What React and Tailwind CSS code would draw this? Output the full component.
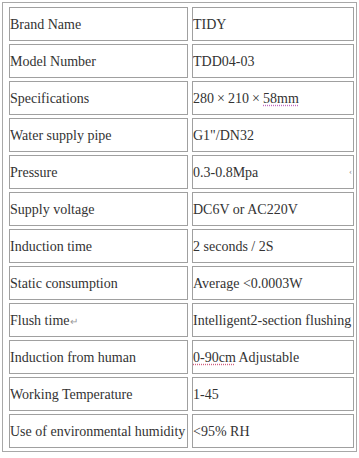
import React from "react";

const rows = [
  ["Brand Name", "TIDY"],
  ["Model Number", "TDD04-03"],
  ["Specifications", "spec"],
  ["Water supply pipe", "G1\"/DN32"],
  ["Pressure", "pressure"],
  ["Supply voltage", "DC6V or AC220V"],
  ["Induction time", "2 seconds / 2S"],
  ["Static consumption", "Average <0.0003W"],
  ["Flush time", "Intelligent2-section flushing"],
  ["Induction from human", "range"],
  ["Working Temperature", "1-45"],
  ["Use of environmental humidity", "<95% RH"],
];

function Times() {
  return <span className="inline-block w-[14px] text-center">×</span>;
}

function Value({ v }) {
  if (v === "spec") {
    return (
      <span>
        280<Times />210<Times />
        <span className="underline decoration-dotted decoration-[#c06cc0] underline-offset-2">58mm</span>
      </span>
    );
  }
  if (v === "pressure") {
    return (
      <span className="flex w-full items-center justify-between">
        <span>0.3-0.8Mpa</span>
        <span className="mr-[1px] text-[9px] text-[#888]">‹</span>
      </span>
    );
  }
  if (v === "range") {
    return (
      <span>
        <span className="underline decoration-dotted decoration-[#d06080] underline-offset-2">0-90cm</span> Adjustable
      </span>
    );
  }
  return <span>{v}</span>;
}

function Label({ t }) {
  if (t === "Flush time") {
    return (
      <span>
        Flush time<span className="text-[10px] text-[#999]">↵</span>
      </span>
    );
  }
  return <span>{t}</span>;
}

export default function App() {
  return (
    <div className="bg-white w-[359px] h-[458px] pt-[2px] pl-[2px]">
      <div
        className="w-[355px] border border-[#a8a8a8] pl-[6px] pr-[2px] pt-[4px] pb-[3px]"
        style={{ fontFamily: '"Liberation Serif", "Times New Roman", serif' }}
      >
        <div className="grid grid-cols-[179px_162px] gap-x-[4px] gap-y-[3px] text-[14px] text-[#333]">
          {rows.map(([k, v]) => (
            <React.Fragment key={k}>
              <div className="h-[34px] border border-[#a0a0a0] flex items-center whitespace-nowrap overflow-hidden">
                <Label t={k} />
              </div>
              <div className="h-[34px] border border-[#a0a0a0] flex items-center whitespace-nowrap overflow-hidden">
                <Value v={v} />
              </div>
            </React.Fragment>
          ))}
        </div>
      </div>
    </div>
  );
}
